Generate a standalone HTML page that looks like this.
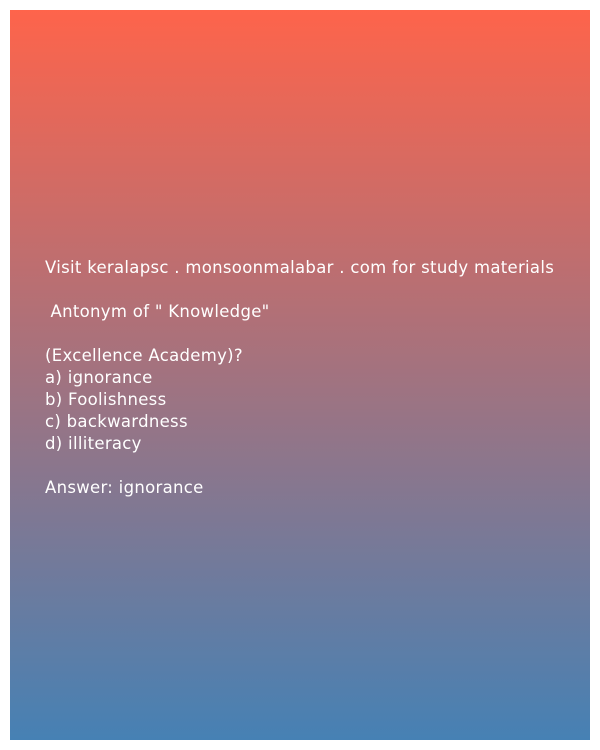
<!DOCTYPE html>
<html><head><meta charset="utf-8"><style>
html,body{margin:0;padding:0;background:#fff;width:600px;height:750px;overflow:hidden}
.box{position:absolute;left:10px;top:10px;width:580px;height:730px;background:linear-gradient(to bottom,#fe644b,#4681b4)}
.t{position:absolute;left:45px;top:257px;color:#fff;font-family:"DejaVu Sans","Liberation Sans",sans-serif;font-size:16.5px;line-height:22px;white-space:pre;letter-spacing:0.3px}
</style></head><body>
<div class="box"></div>
<div class="t">Visit keralapsc . monsoonmalabar . com for study materials

 Antonym of " Knowledge"

(Excellence Academy)?
a) ignorance
b) Foolishness
c) backwardness
d) illiteracy

Answer: ignorance</div>
</body></html>
